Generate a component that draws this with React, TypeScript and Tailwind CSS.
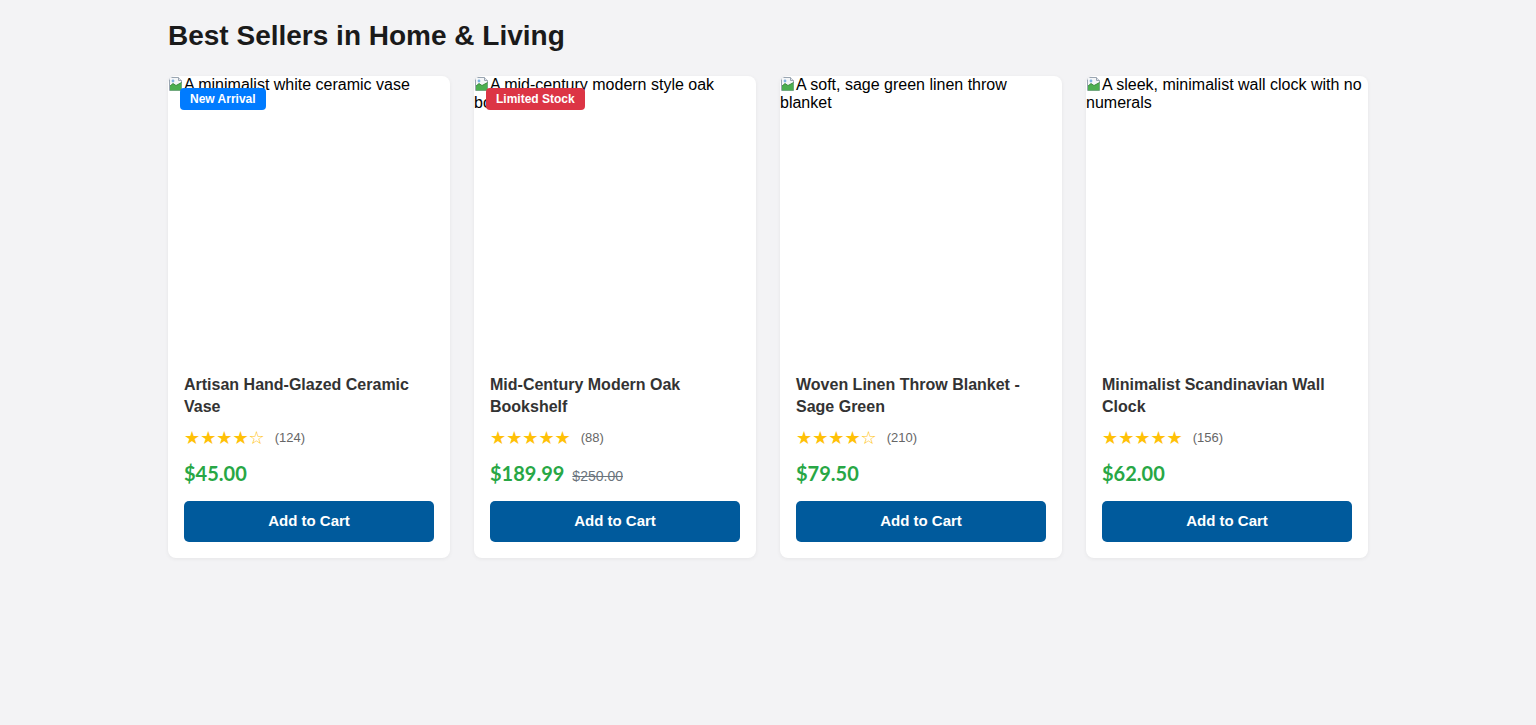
type Product = {
  alt: string;
  title: string;
  stars: string;
  reviews: number;
  price: string;
  oldPrice?: string;
  badge?: { label: string; tone: 'blue' | 'red' };
};

const products: Product[] = [
  {
    alt: 'A minimalist white ceramic vase',
    title: 'Artisan Hand-Glazed Ceramic Vase',
    stars: '★★★★☆',
    reviews: 124,
    price: '$45.00',
    badge: { label: 'New Arrival', tone: 'blue' },
  },
  {
    alt: 'A mid-century modern style oak bookshelf',
    title: 'Mid-Century Modern Oak Bookshelf',
    stars: '★★★★★',
    reviews: 88,
    price: '$189.99',
    oldPrice: '$250.00',
    badge: { label: 'Limited Stock', tone: 'red' },
  },
  {
    alt: 'A soft, sage green linen throw blanket',
    title: 'Woven Linen Throw Blanket - Sage Green',
    stars: '★★★★☆',
    reviews: 210,
    price: '$79.50',
  },
  {
    alt: 'A sleek, minimalist wall clock with no numerals',
    title: 'Minimalist Scandinavian Wall Clock',
    stars: '★★★★★',
    reviews: 156,
    price: '$62.00',
  },
];

function BrokenImageIcon() {
  return (
    <svg width="16" height="16" viewBox="0 0 16 16" className="inline-block align-[-2px]">
      <path d="M1.5 1.5h9l3 3v10h-12z" fill="#f4f6f8" stroke="#9aa5b1" strokeWidth="1" />
      <path d="M10.5 1.5v3h3" fill="#dfe4ea" stroke="#9aa5b1" strokeWidth="1" />
      <path d="M2 14.5V10l3-2.5 3 2 5.5-3v8z" fill="#4caf50" />
      <path d="M2 10l3-2.5 3 2 5.5-3" fill="none" stroke="#2e7d32" strokeWidth="0.8" />
      <circle cx="5" cy="5" r="1.4" fill="#7fb3e0" />
    </svg>
  );
}

function ProductCard({ product }: { product: Product }) {
  return (
    <div className="flex flex-col overflow-hidden rounded-lg bg-white shadow-[0_1px_4px_rgba(0,0,0,0.06)]">
      <div className="relative h-[280px] w-full">
        <p className="text-[16px] leading-[18px] text-black">
          <BrokenImageIcon />
          {product.alt}
        </p>
        {product.badge && (
          <span
            className={`absolute left-3 top-3 rounded px-[10px] py-[3px] text-[12px] font-bold leading-[16px] text-white ${
              product.badge.tone === 'blue' ? 'bg-[#007bff]' : 'bg-[#dc3545]'
            }`}
          >
            {product.badge.label}
          </span>
        )}
      </div>
      <div className="flex flex-col px-4 pb-4 pt-[18px]">
        <h3 className="text-[16px] font-bold leading-[22px] text-[#333333]">{product.title}</h3>
        <div className="mt-[10px] flex h-[20px] items-center">
          <span className="font-['DejaVu_Sans',sans-serif] text-[18px] leading-[20px] text-[#ffc107]">
            {product.stars}
          </span>
          <span className="ml-[10px] text-[13px] text-[#666666]">({product.reviews})</span>
        </div>
        <div className="mt-[12px] flex h-[26px] items-baseline gap-2">
          <span className="font-['Lato',sans-serif] text-[20px] font-bold leading-[26px] text-[#28a745]">
            {product.price}
          </span>
          {product.oldPrice && (
            <span className="text-[14px] leading-[20px] text-[#6c757d] line-through">{product.oldPrice}</span>
          )}
        </div>
        <button className="mt-[15px] h-[41px] w-full rounded-[5px] bg-[#005a9c] text-[15px] font-bold text-white">
          Add to Cart
        </button>
      </div>
    </div>
  );
}

export default function App() {
  return (
    <div className="min-h-[725px] bg-[#f3f3f5] font-['Liberation_Sans',Arial,sans-serif]">
      <div className="mx-auto w-[1200px] pt-[19px]">
        <h2 className="mb-[23px] text-[28px] font-bold leading-[34px] text-[#1a1a1a]">
          Best Sellers in Home &amp; Living
        </h2>
        <div className="grid grid-cols-4 items-start gap-6">
          {products.map((p) => (
            <ProductCard key={p.title} product={p} />
          ))}
        </div>
      </div>
    </div>
  );
}
